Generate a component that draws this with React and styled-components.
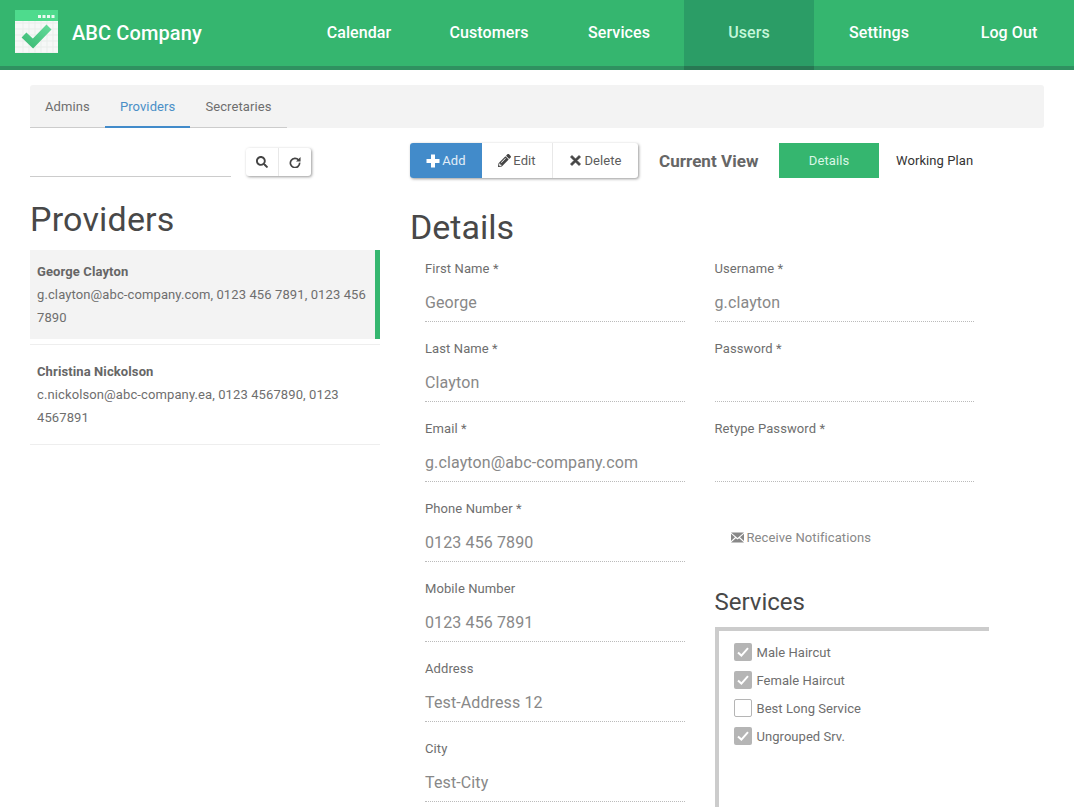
import React from 'react';
import styled, { createGlobalStyle } from 'styled-components';
import { FaSearch, FaPencilAlt } from 'react-icons/fa';

const GlobalStyle = createGlobalStyle`
  html, body {
    margin: 0;
    height: 807px;
    overflow: hidden;
    background: #fff;
    font-family: Roboto, 'Liberation Sans', sans-serif;
    color: #6e6e6e;
  }
  * { box-sizing: border-box; }
`;

const Header = styled.header`
  display: flex;
  justify-content: space-between;
  height: 70px;
  background: #35b66f;
  border-bottom: 4px solid #2f9160;
`;

const Brand = styled.div`
  display: flex;
  align-items: flex-start;
  gap: 14px;
  padding: 10px 0 0 15px;
  color: #fff;
  font-size: 20px;
  font-weight: 500;
  letter-spacing: 0.1px;
  & > span { margin-top: 11px; line-height: 24px; }
`;

const Nav = styled.nav`
  display: flex;
`;

const NavItem = styled.a`
  display: flex;
  align-items: center;
  justify-content: center;
  width: 130px;
  height: 70px;
  padding-bottom: 2px;
  font-size: 16px;
  font-weight: 500;
  letter-spacing: 0.1px;
  color: ${(p) => (p.$active ? '#c4f7da' : '#fff')};
  background: ${(p) => (p.$active ? '#2b9d66' : 'transparent')};
  border-bottom: 4px solid ${(p) => (p.$active ? '#287853' : 'transparent')};
`;

const Page = styled.main`
  padding: 15px 30px 0;
`;

const TabBar = styled.div`
  display: flex;
  height: 43px;
  background: #f3f3f3;
  border-radius: 3px;
`;

const Tabs = styled.div`
  display: flex;
  border-bottom: 1px solid #ccc;
`;

const Tab = styled.a`
  display: flex;
  align-items: center;
  height: 43px;
  padding: ${(p) => (p.$active ? '2px 15px 0' : '0 15px')};
  font-size: 13px;
  letter-spacing: 0.1px;
  color: ${(p) => (p.$active ? '#4a8fc7' : '#6e6e6e')};
  border-bottom: ${(p) => (p.$active ? '2px solid #428bca' : 'none')};
`;

const Columns = styled.div`
  display: flex;
  gap: 30px;
  margin-top: 15px;
`;

const LeftColumn = styled.section`
  width: 350px;
  flex: none;
`;

const RightColumn = styled.section`
  flex: 1;
`;

const SearchRow = styled.div`
  display: flex;
  align-items: flex-start;
  gap: 15px;
  padding-top: 5px;
  height: 35px;
`;

const SearchInput = styled.div`
  width: 201px;
  height: 29px;
  border-bottom: 1px solid #ccc;
`;

const ButtonGroup = styled.div`
  display: flex;
  background: #fff;
  border-radius: 3px;
  box-shadow: 1px 1px 3px rgba(0, 0, 0, 0.4);
`;

const IconButton = styled.button`
  display: flex;
  align-items: center;
  justify-content: center;
  width: ${(p) => p.$w}px;
  height: 28px;
  padding: 0 0 1px;
  background: none;
  border: 0;
  border-left: ${(p) => (p.$divided ? '1px solid #e8e8e8' : '0')};
  color: #444;
`;

const ActionButton = styled.button`
  display: flex;
  align-items: center;
  justify-content: center;
  gap: 2px;
  width: ${(p) => p.$w}px;
  height: 35px;
  padding: 0;
  border: 0;
  border-left: ${(p) => (p.$divided ? '1px solid #e8e8e8' : '0')};
  border-radius: ${(p) => (p.$primary ? '3px 0 0 3px' : '0')};
  font-family: inherit;
  font-size: 13px;
  letter-spacing: 0.1px;
  color: ${(p) => (p.$primary ? '#e3eef8' : '#5c5c5c')};
  background: ${(p) => (p.$primary ? '#428bca' : 'transparent')};
  & svg { color: ${(p) => (p.$primary ? '#fff' : '#444')}; }
`;

const Heading = styled.h2`
  margin: ${(p) => p.$margin};
  font-size: 34px;
  font-weight: 400;
  line-height: 36px;
  letter-spacing: ${(p) => p.$spacing || '0'};
  color: #484848;
`;

const ProviderItem = styled.div`
  height: 89px;
  padding: 10px 7px 0;
  font-size: 13px;
  line-height: 23px;
  letter-spacing: 0.11px;
  background: ${(p) => (p.$selected ? '#f3f3f3' : 'transparent')};
  border-right: 5px solid ${(p) => (p.$selected ? '#35b66f' : 'transparent')};
  & strong { display: block; font-weight: 700; color: #666; }
`;

const ListDivider = styled.div`
  height: 1px;
  margin: 5px 0;
  background: #eee;
`;

const Toolbar = styled.div`
  display: flex;
  align-items: center;
`;

const ToolGroup = styled(ButtonGroup)`
  margin-right: 21px;
`;

const ViewLabel = styled.span`
  width: 120px;
  font-size: 17px;
  font-weight: 700;
  letter-spacing: 0.05px;
  color: #666;
`;

const ViewTab = styled.a`
  display: flex;
  align-items: center;
  justify-content: ${(p) => (p.$active ? 'center' : 'flex-start')};
  width: 100px;
  height: 35px;
  padding-left: ${(p) => (p.$active ? '0' : '17px')};
  font-size: 13px;
  letter-spacing: 0.08px;
  color: ${(p) => (p.$active ? '#d9f7e6' : '#333')};
  background: ${(p) => (p.$active ? '#35b66f' : 'transparent')};
  white-space: nowrap;
`;

const FormColumns = styled.div`
  display: flex;
  gap: 30px;
  padding-left: 15px;
  padding-top: 1px;
`;

const FormColumn = styled.div`
  width: 259.5px;
`;

const Field = styled.div`
  height: 80px;
`;

const Label = styled.label`
  display: block;
  height: 15px;
  font-size: 13px;
  line-height: 15px;
  letter-spacing: 0.1px;
  color: #6e6e6e;
`;

const Value = styled.div`
  height: 46px;
  padding-top: 17px;
  font-size: 16px;
  line-height: 19px;
  letter-spacing: 0.12px;
  color: #888;
  border-bottom: 1px dotted #bbb;
`;

const Notify = styled.div`
  display: flex;
  align-items: center;
  gap: 3px;
  height: 16px;
  margin: 28px 0 0 16px;
  font-size: 13px;
  letter-spacing: 0.1px;
  color: #888;
`;

const ServicesTitle = styled.h3`
  margin: 43px 0 11px;
  font-size: 24px;
  font-weight: 400;
  line-height: 28px;
  color: #484848;
`;

const ServicesBox = styled.div`
  width: 274px;
  height: 300px;
  padding: 7px 15px;
  border-top: 4px solid #ccc;
  border-left: 4px solid #ccc;
`;

const ServiceRow = styled.div`
  display: flex;
  align-items: center;
  gap: 5px;
  height: 28px;
  font-size: 13px;
  letter-spacing: 0.05px;
  color: #6e6e6e;
`;

const CheckBox = styled.span`
  display: flex;
  align-items: center;
  justify-content: center;
  width: 18px;
  height: 18px;
  border-radius: 2px;
  background: ${(p) => (p.$checked ? '#b5b5b5' : '#fff')};
  border: ${(p) => (p.$checked ? '0' : '1px solid #b5b5b5')};
`;

const gridLines = [8, 14, 20, 26, 32, 38];

const Logo = () => (
  <svg width="43" height="43" viewBox="0 0 43 43">
    <defs>
      <linearGradient id="logoCheck" x1="0" y1="1" x2="1" y2="0">
        <stop offset="0" stopColor="#3fbd78" />
        <stop offset="1" stopColor="#62d998" />
      </linearGradient>
    </defs>
    <rect width="43" height="43" fill="#f6f8f7" />
    <g stroke="#e9eeeb" strokeWidth="1">
      {gridLines.map((n) => (
        <path key={n} d={`M${n} 11V43M0 ${n + 5}H43`} />
      ))}
    </g>
    <rect width="43" height="11" fill="#4edb8d" />
    <g fill="#eafaf1">
      <rect x="23" y="5" width="3" height="3" />
      <rect x="27.5" y="5" width="3" height="3" />
      <rect x="32" y="5" width="3" height="3" />
      <rect x="36.5" y="5" width="3" height="3" />
    </g>
    <path d="M9 25L18 33.5 34 17" fill="none" stroke="url(#logoCheck)" strokeWidth="7" />
  </svg>
);

const PlusIcon = () => (
  <svg width="14" height="14" viewBox="0 0 14 14">
    <path d="M5 0.5h4v4.5h4.5v4H9v4.5H5V9H0.5V5H5z" fill="currentColor" />
  </svg>
);

const RemoveIcon = () => (
  <svg width="13" height="13" viewBox="0 0 13 13">
    <path d="M1.5 3L3 1.5 6.5 5 10 1.5 11.5 3 8 6.5 11.5 10 10 11.5 6.5 8 3 11.5 1.5 10 5 6.5z" fill="currentColor" stroke="currentColor" strokeWidth="0.8" />
  </svg>
);

const RepeatIcon = () => (
  <svg width="12" height="12" viewBox="0 0 13 13">
    <path d="M10.4 4.4A5 5 0 1 0 11.5 7.2" fill="none" stroke="currentColor" strokeWidth="1.8" />
    <path d="M12.5 1V6H7.6z" fill="currentColor" />
  </svg>
);

const Envelope = () => (
  <svg width="13" height="11" viewBox="0 0 13 11">
    <path d="M0 0.5h13L6.5 6z M0 1.8V9L4 5.2z M13 1.8V9L9 5.2z M0 10.5L4.8 6.2 6.5 7.6 8.2 6.2 13 10.5z" fill="#888" />
  </svg>
);

const Tick = () => (
  <svg width="12" height="10" viewBox="0 0 12 10">
    <path d="M1 5.5L4.4 8.6 11 1.2" fill="none" stroke="#fff" strokeWidth="2" />
  </svg>
);

const navItems = ['Calendar', 'Customers', 'Services', 'Users', 'Settings', 'Log Out'];

const leftFields = [
  ['First Name *', 'George'],
  ['Last Name *', 'Clayton'],
  ['Email *', 'g.clayton@abc-company.com'],
  ['Phone Number *', '0123 456 7890'],
  ['Mobile Number', '0123 456 7891'],
  ['Address', 'Test-Address 12'],
  ['City', 'Test-City'],
];

const rightFields = [
  ['Username *', 'g.clayton'],
  ['Password *', ''],
  ['Retype Password *', ''],
];

const services = [
  ['Male Haircut', true],
  ['Female Haircut', true],
  ['Best Long Service', false],
  ['Ungrouped Srv.', true],
];

const App = () => (
  <>
    <GlobalStyle />
    <Header>
      <Brand>
        <Logo />
        <span>ABC Company</span>
      </Brand>
      <Nav>
        {navItems.map((item) => (
          <NavItem key={item} $active={item === 'Users'}>
            {item}
          </NavItem>
        ))}
      </Nav>
    </Header>
    <Page>
      <TabBar>
        <Tabs>
          <Tab>Admins</Tab>
          <Tab $active>Providers</Tab>
          <Tab>Secretaries</Tab>
        </Tabs>
      </TabBar>
      <Columns>
        <LeftColumn>
          <SearchRow>
            <SearchInput />
            <ButtonGroup>
              <IconButton $w={32}>
                <FaSearch size={12} />
              </IconButton>
              <IconButton $w={33} $divided>
                <RepeatIcon />
              </IconButton>
            </ButtonGroup>
          </SearchRow>
          <Heading $margin="23px 0 13px" $spacing="0.2px">Providers</Heading>
          <ProviderItem $selected>
            <strong>George Clayton</strong>
            g.clayton@abc-company.com, 0123 456 7891, 0123 456 7890
          </ProviderItem>
          <ListDivider />
          <ProviderItem>
            <strong>Christina Nickolson</strong>
            c.nickolson@abc-company.ea, 0123 4567890, 0123 4567891
          </ProviderItem>
          <ListDivider />
        </LeftColumn>
        <RightColumn>
          <Toolbar>
            <ToolGroup>
              <ActionButton $w={72} $primary>
                <PlusIcon />
                Add
              </ActionButton>
              <ActionButton $w={70}>
                <FaPencilAlt size={13} />
                Edit
              </ActionButton>
              <ActionButton $w={86} $divided>
                <RemoveIcon />
                Delete
              </ActionButton>
            </ToolGroup>
            <ViewLabel>Current View</ViewLabel>
            <ViewTab $active>Details</ViewTab>
            <ViewTab>Working Plan</ViewTab>
          </Toolbar>
          <Heading $margin="31px 0 15px">Details</Heading>
          <FormColumns>
            <FormColumn>
              {leftFields.map(([label, value]) => (
                <Field key={label}>
                  <Label>{label}</Label>
                  <Value>{value}</Value>
                </Field>
              ))}
            </FormColumn>
            <FormColumn>
              {rightFields.map(([label, value]) => (
                <Field key={label}>
                  <Label>{label}</Label>
                  <Value>{value}</Value>
                </Field>
              ))}
              <Notify>
                <Envelope />
                Receive Notifications
              </Notify>
              <ServicesTitle>Services</ServicesTitle>
              <ServicesBox>
                {services.map(([name, checked]) => (
                  <ServiceRow key={name}>
                    <CheckBox $checked={checked}>{checked && <Tick />}</CheckBox>
                    {name}
                  </ServiceRow>
                ))}
              </ServicesBox>
            </FormColumn>
          </FormColumns>
        </RightColumn>
      </Columns>
    </Page>
  </>
);

export default App;
